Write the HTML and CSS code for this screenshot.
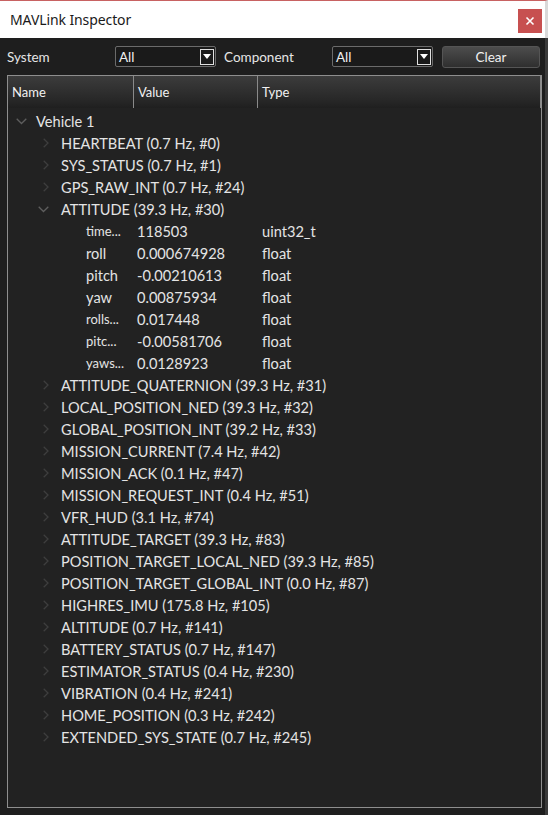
FILE: index.html
```html
<!DOCTYPE html>
<html>
<head>
<meta charset="utf-8">
<link rel="stylesheet" href="styles.css">
</head>
<body>
<div class="window">
  <div class="titlebar">
    <span class="title">MAVLink Inspector</span>
    <div class="close"><svg width="10" height="10" viewBox="0 0 10 10"><path d="M1.5 1.5 L8.5 8.5 M8.5 1.5 L1.5 8.5" stroke="#fff" stroke-width="1.6"/></svg></div>
  </div>
  <div class="body">
    <div class="toolbar">
      <span class="lbl lbl-system">System</span>
      <div class="combo"><span>All</span><span class="arrow"><svg width="8" height="5" viewBox="0 0 8 5"><path d="M0 0 H8 L4 5 Z" fill="#fff"/></svg></span></div>
      <span class="lbl lbl-comp">Component</span>
      <div class="combo"><span>All</span><span class="arrow"><svg width="8" height="5" viewBox="0 0 8 5"><path d="M0 0 H8 L4 5 Z" fill="#fff"/></svg></span></div>
      <div class="btn">Clear</div>
    </div>
    <div class="tree">
      <div class="header">
        <div class="hcell hname">Name</div>
        <div class="hcell hvalue">Value</div>
        <div class="hcell htype">Type</div>
      </div>
      <div class="rows">
        <div class="row vehicle"><span class="chev lvl0"><svg width="11" height="7" viewBox="0 0 11 7"><path d="M0.7 0.7 L5.5 5.5 L10.3 0.7" fill="none" stroke="#5e5e5e" stroke-width="1.3"/></svg></span><span>Vehicle 1</span></div>
        <div class="row msg"><span class="chev right"><svg width="6" height="10" viewBox="0 0 6 10"><path d="M0.7 0.7 L5 5 L0.7 9.3" fill="none" stroke="#3e3e3e" stroke-width="1.3"/></svg></span><span>HEARTBEAT (0.7 Hz, #0)</span></div>
        <div class="row msg"><span class="chev right"><svg width="6" height="10" viewBox="0 0 6 10"><path d="M0.7 0.7 L5 5 L0.7 9.3" fill="none" stroke="#3e3e3e" stroke-width="1.3"/></svg></span><span>SYS_STATUS (0.7 Hz, #1)</span></div>
        <div class="row msg"><span class="chev right"><svg width="6" height="10" viewBox="0 0 6 10"><path d="M0.7 0.7 L5 5 L0.7 9.3" fill="none" stroke="#3e3e3e" stroke-width="1.3"/></svg></span><span>GPS_RAW_INT (0.7 Hz, #24)</span></div>
        <div class="row msg"><span class="chev downmsg"><svg width="11" height="7" viewBox="0 0 11 7"><path d="M0.7 0.7 L5.5 5.5 L10.3 0.7" fill="none" stroke="#5e5e5e" stroke-width="1.3"/></svg></span><span>ATTITUDE (39.3 Hz, #30)</span></div>
        <div class="row field"><span class="fname small">time...</span><span class="fval">118503</span><span class="ftype">uint32_t</span></div>
        <div class="row field"><span class="fname">roll</span><span class="fval">0.000674928</span><span class="ftype">float</span></div>
        <div class="row field"><span class="fname">pitch</span><span class="fval">-0.00210613</span><span class="ftype">float</span></div>
        <div class="row field"><span class="fname">yaw</span><span class="fval">0.00875934</span><span class="ftype">float</span></div>
        <div class="row field"><span class="fname small">rolls...</span><span class="fval">0.017448</span><span class="ftype">float</span></div>
        <div class="row field"><span class="fname small">pitc...</span><span class="fval">-0.00581706</span><span class="ftype">float</span></div>
        <div class="row field"><span class="fname small">yaws...</span><span class="fval">0.0128923</span><span class="ftype">float</span></div>
        <div class="row msg"><span class="chev right"><svg width="6" height="10" viewBox="0 0 6 10"><path d="M0.7 0.7 L5 5 L0.7 9.3" fill="none" stroke="#3e3e3e" stroke-width="1.3"/></svg></span><span>ATTITUDE_QUATERNION (39.3 Hz, #31)</span></div>
        <div class="row msg"><span class="chev right"><svg width="6" height="10" viewBox="0 0 6 10"><path d="M0.7 0.7 L5 5 L0.7 9.3" fill="none" stroke="#3e3e3e" stroke-width="1.3"/></svg></span><span>LOCAL_POSITION_NED (39.3 Hz, #32)</span></div>
        <div class="row msg"><span class="chev right"><svg width="6" height="10" viewBox="0 0 6 10"><path d="M0.7 0.7 L5 5 L0.7 9.3" fill="none" stroke="#3e3e3e" stroke-width="1.3"/></svg></span><span>GLOBAL_POSITION_INT (39.2 Hz, #33)</span></div>
        <div class="row msg"><span class="chev right"><svg width="6" height="10" viewBox="0 0 6 10"><path d="M0.7 0.7 L5 5 L0.7 9.3" fill="none" stroke="#3e3e3e" stroke-width="1.3"/></svg></span><span>MISSION_CURRENT (7.4 Hz, #42)</span></div>
        <div class="row msg"><span class="chev right"><svg width="6" height="10" viewBox="0 0 6 10"><path d="M0.7 0.7 L5 5 L0.7 9.3" fill="none" stroke="#3e3e3e" stroke-width="1.3"/></svg></span><span>MISSION_ACK (0.1 Hz, #47)</span></div>
        <div class="row msg"><span class="chev right"><svg width="6" height="10" viewBox="0 0 6 10"><path d="M0.7 0.7 L5 5 L0.7 9.3" fill="none" stroke="#3e3e3e" stroke-width="1.3"/></svg></span><span>MISSION_REQUEST_INT (0.4 Hz, #51)</span></div>
        <div class="row msg"><span class="chev right"><svg width="6" height="10" viewBox="0 0 6 10"><path d="M0.7 0.7 L5 5 L0.7 9.3" fill="none" stroke="#3e3e3e" stroke-width="1.3"/></svg></span><span>VFR_HUD (3.1 Hz, #74)</span></div>
        <div class="row msg"><span class="chev right"><svg width="6" height="10" viewBox="0 0 6 10"><path d="M0.7 0.7 L5 5 L0.7 9.3" fill="none" stroke="#3e3e3e" stroke-width="1.3"/></svg></span><span>ATTITUDE_TARGET (39.3 Hz, #83)</span></div>
        <div class="row msg"><span class="chev right"><svg width="6" height="10" viewBox="0 0 6 10"><path d="M0.7 0.7 L5 5 L0.7 9.3" fill="none" stroke="#3e3e3e" stroke-width="1.3"/></svg></span><span>POSITION_TARGET_LOCAL_NED (39.3 Hz, #85)</span></div>
        <div class="row msg"><span class="chev right"><svg width="6" height="10" viewBox="0 0 6 10"><path d="M0.7 0.7 L5 5 L0.7 9.3" fill="none" stroke="#3e3e3e" stroke-width="1.3"/></svg></span><span>POSITION_TARGET_GLOBAL_INT (0.0 Hz, #87)</span></div>
        <div class="row msg"><span class="chev right"><svg width="6" height="10" viewBox="0 0 6 10"><path d="M0.7 0.7 L5 5 L0.7 9.3" fill="none" stroke="#3e3e3e" stroke-width="1.3"/></svg></span><span>HIGHRES_IMU (175.8 Hz, #105)</span></div>
        <div class="row msg"><span class="chev right"><svg width="6" height="10" viewBox="0 0 6 10"><path d="M0.7 0.7 L5 5 L0.7 9.3" fill="none" stroke="#3e3e3e" stroke-width="1.3"/></svg></span><span>ALTITUDE (0.7 Hz, #141)</span></div>
        <div class="row msg"><span class="chev right"><svg width="6" height="10" viewBox="0 0 6 10"><path d="M0.7 0.7 L5 5 L0.7 9.3" fill="none" stroke="#3e3e3e" stroke-width="1.3"/></svg></span><span>BATTERY_STATUS (0.7 Hz, #147)</span></div>
        <div class="row msg"><span class="chev right"><svg width="6" height="10" viewBox="0 0 6 10"><path d="M0.7 0.7 L5 5 L0.7 9.3" fill="none" stroke="#3e3e3e" stroke-width="1.3"/></svg></span><span>ESTIMATOR_STATUS (0.4 Hz, #230)</span></div>
        <div class="row msg"><span class="chev right"><svg width="6" height="10" viewBox="0 0 6 10"><path d="M0.7 0.7 L5 5 L0.7 9.3" fill="none" stroke="#3e3e3e" stroke-width="1.3"/></svg></span><span>VIBRATION (0.4 Hz, #241)</span></div>
        <div class="row msg"><span class="chev right"><svg width="6" height="10" viewBox="0 0 6 10"><path d="M0.7 0.7 L5 5 L0.7 9.3" fill="none" stroke="#3e3e3e" stroke-width="1.3"/></svg></span><span>HOME_POSITION (0.3 Hz, #242)</span></div>
        <div class="row msg"><span class="chev right"><svg width="6" height="10" viewBox="0 0 6 10"><path d="M0.7 0.7 L5 5 L0.7 9.3" fill="none" stroke="#3e3e3e" stroke-width="1.3"/></svg></span><span>EXTENDED_SYS_STATE (0.7 Hz, #245)</span></div>
      </div>
    </div>
  </div>
</div>
</body>
</html>
```

FILE: styles.css
```css
html, body {
  margin: 0;
  padding: 0;
  background: #1e1e1e;
}
.window {
  width: 548px;
  height: 815px;
  display: flex;
  flex-direction: column;
  font-family: Lato, "Noto Sans", sans-serif;
  color: #e6e6e6;
  box-sizing: border-box;
}
.titlebar {
  height: 38px;
  box-sizing: border-box;
  border-top: 1px solid #c86262;
  border-right: 3px solid #d9d9d9;
  background: #ffffff;
  display: flex;
  align-items: center;
  padding-left: 10px;
  position: relative;
}
.title {
  font-family: "Noto Sans", sans-serif;
  font-size: 14px;
  color: #1a1a1a;
  letter-spacing: -0.1px;
}
.close {
  position: absolute;
  right: 3px;
  top: 8px;
  width: 24px;
  height: 24px;
  background: #c75050;
  display: flex;
  align-items: center;
  justify-content: center;
}
.body {
  flex: 1;
  background: #1e1e1e;
  border-right: 3px solid #3a3a3a;
  display: flex;
  flex-direction: column;
  padding: 0 3px 7px 7px;
}
.toolbar {
  height: 37px;
  display: flex;
  align-items: center;
  font-size: 13.5px;
  color: #e6e6e6;
}
.lbl-system {
  width: 108px;
}
.lbl-comp {
  width: 108px;
  padding-left: 8px;
}
.combo {
  width: 101px;
  height: 21px;
  box-sizing: border-box;
  border: 1px solid #6b6b6b;
  border-radius: 2px;
  background: #1a1a1a;
  display: flex;
  align-items: center;
  justify-content: space-between;
  padding-left: 3px;
  padding-right: 1px;
  font-size: 13.5px;
  color: #f0f0f0;
}
.arrow {
  width: 14px;
  height: 16px;
  box-sizing: border-box;
  border: 1px solid #e0e0e0;
  display: flex;
  align-items: center;
  justify-content: center;
}
.btn {
  margin-left: 9px;
  width: 98px;
  height: 22px;
  box-sizing: border-box;
  border: 1px solid #555555;
  border-radius: 3px;
  background: linear-gradient(#4d4d4d, #2f2f2f);
  display: flex;
  align-items: center;
  justify-content: center;
  font-size: 13.5px;
  color: #f0f0f0;
}
.tree {
  flex: 1;
  border: 1px solid #8e8e8e;
  background: #222222;
  display: flex;
  flex-direction: column;
  width: 535px;
  box-sizing: border-box;
}
.header {
  height: 32px;
  display: grid;
  grid-template-columns: 125px 124px 1fr;
  background: linear-gradient(#3c3c3c, #262626 80%, #1f1f1f);
  flex-shrink: 0;
}
.hcell {
  display: flex;
  align-items: center;
  padding-left: 4px;
  font-size: 13px;
  color: #f2f2f2;
}
.hvalue, .htype {
  border-left: 1px solid #8a8a8a;
}
.htype {
  border-right: 1px solid #8a8a8a;
}
.rows {
  padding-top: 2px;
  display: flex;
  flex-direction: column;
}
.row {
  height: 22px;
  display: flex;
  align-items: center;
  font-size: 14.6px;
  color: #e4e4e4;
  white-space: nowrap;
}
.vehicle {
  padding-left: 8px;
}
.chev {
  display: flex;
  align-items: center;
  justify-content: flex-start;
}
.chev.lvl0 {
  width: 20px;
}
.msg {
  padding-left: 30px;
}
.chev.right {
  width: 23px;
  padding-left: 5px;
  box-sizing: border-box;
}
.chev.downmsg {
  width: 23px;
  box-sizing: border-box;
}
.field {
  display: grid;
  grid-template-columns: 78px 51px 125px 1fr;
}
.fname {
  grid-column: 2;
}
.fname.small {
  font-size: 13px;
}
.fval {
  grid-column: 3;
}
.ftype {
  grid-column: 4;
}
```
